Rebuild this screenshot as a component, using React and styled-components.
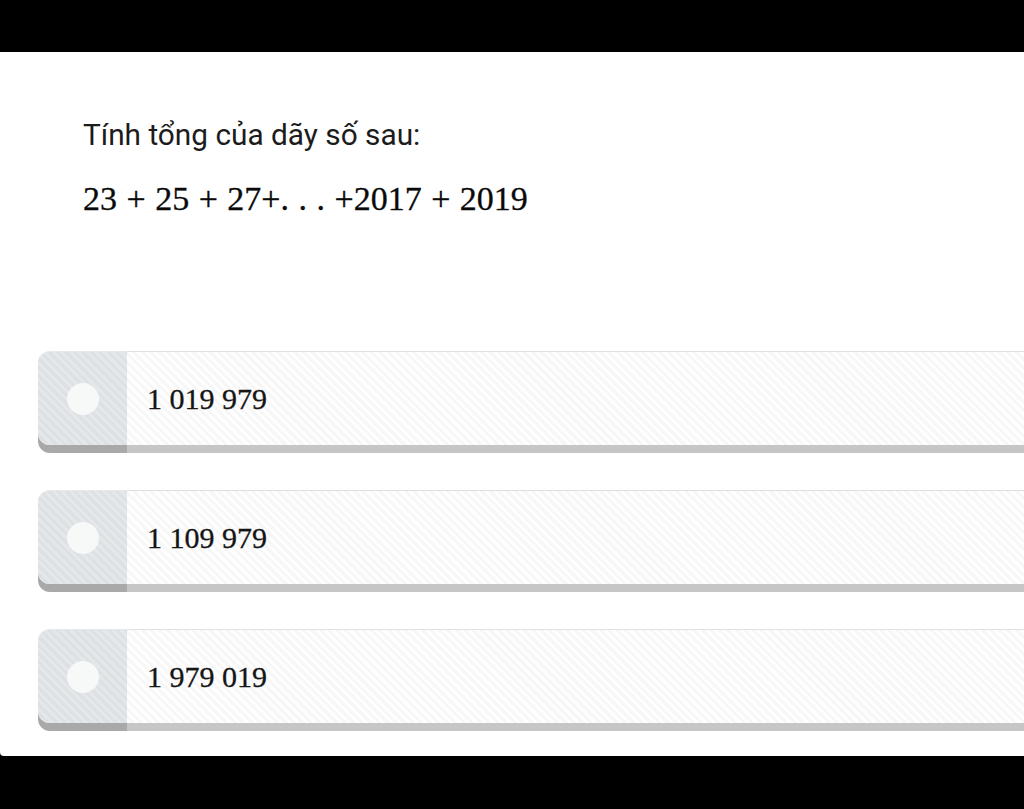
import styled, { createGlobalStyle } from "styled-components";

const GlobalStyle = createGlobalStyle`
  html, body {
    margin: 0;
    padding: 0;
    background: #000;
  }
`;

const Screen = styled.div`
  display: flex;
  flex-direction: column;
  height: 809px;
  padding: 52px 0 53px;
  box-sizing: border-box;
`;

const Panel = styled.main`
  flex: 1;
  background: #fff;
  overflow: hidden;
  border-bottom-left-radius: 4px;
  padding: 65px 0 0 38px;
  box-sizing: border-box;
`;

const Question = styled.div`
  padding-left: 45px;
  margin-bottom: 132px;
`;

const Prompt = styled.p`
  margin: 0 0 26px;
  font-family: Roboto, "Noto Sans", sans-serif;
  font-size: 29.8px;
  line-height: 36px;
  color: #1c1c1c;
`;

const Formula = styled.p`
  margin: 0;
  font-family: "Liberation Serif", serif;
  font-size: 34px;
  line-height: 40px;
  word-spacing: 1px;
  color: #0a0a0a;
  -webkit-text-stroke: 0.3px #0a0a0a;
`;

const Options = styled.div`
  display: flex;
  flex-direction: column;
  gap: 37px;
`;

const Option = styled.label`
  display: flex;
  width: 1100px;
  height: 94px;
  margin-bottom: 8px;
  cursor: pointer;
`;

const Marker = styled.span`
  display: flex;
  align-items: center;
  justify-content: center;
  width: 89px;
  border-radius: 12px 0 0 12px;
  border-top: 1px solid #e6e8ea;
  background: repeating-linear-gradient(
    45deg,
    #dde1e4 0 3px,
    #e5e8ea 3px 6px
  );
  box-shadow: 0 8px 0 #a9a9a9;
`;

const Dot = styled.span`
  width: 32px;
  height: 32px;
  border-radius: 50%;
  background: #f7f8f8;
`;

const Body = styled.span`
  flex: 1;
  display: flex;
  align-items: center;
  padding-left: 20px;
  border-top: 1px solid #e0e0e0;
  background: repeating-linear-gradient(
    45deg,
    #fefefe 0 3px,
    #f7f7f7 3px 6px
  );
  box-shadow: 0 8px 0 #c6c6c6;
  font-family: "Liberation Serif", serif;
  font-size: 30px;
  color: #151515;
  -webkit-text-stroke: 0.3px #151515;
`;

const answers = ["1 019 979", "1 109 979", "1 979 019"];

export default function App() {
  return (
    <>
      <GlobalStyle />
      <Screen>
        <Panel>
          <Question>
            <Prompt>Tính tổng của dãy số sau:</Prompt>
            <Formula>23 + 25 + 27+. . . +2017 + 2019</Formula>
          </Question>
          <Options>
            {answers.map((a) => (
              <Option key={a}>
                <Marker>
                  <Dot />
                </Marker>
                <Body>{a}</Body>
              </Option>
            ))}
          </Options>
        </Panel>
      </Screen>
    </>
  );
}
